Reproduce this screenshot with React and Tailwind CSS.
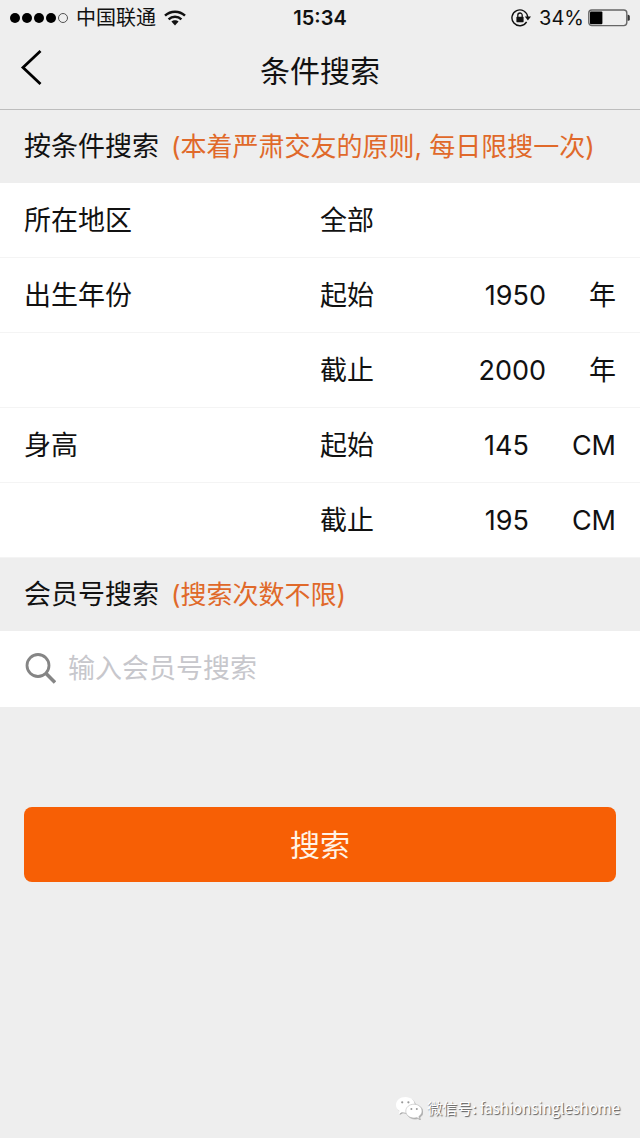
import { useState } from 'react';

const YEARS = ['1950', '1960', '1970', '1980', '1990', '2000'];
const HEIGHTS = ['145', '155', '165', '175', '185', '195'];

const WifiIcon = () => (
  <svg viewBox="0 0 22 16" className="h-4 w-[22px]" aria-hidden="true">
    <g fill="none" stroke="currentColor" strokeWidth="2.5">
      <path d="M1 5.6C6.6 0.4 15.4 0.4 21 5.6" />
      <path d="M4.6 9.3C8.2 6 13.8 6 17.4 9.3" />
    </g>
    <path d="M7.4 11.6C9.4 9.8 12.6 9.8 14.6 11.6L11 15.4Z" fill="currentColor" />
  </svg>
);

const RotationLockIcon = () => (
  <svg viewBox="0 0 20 18" className="h-[18px] w-5" aria-hidden="true">
    <path
      d="M15.6 12.9A7.9 7.9 0 1 1 16.7 8"
      fill="none"
      stroke="currentColor"
      strokeWidth="1.4"
    />
    <path d="M13.8 7.6H20L16.9 11.6Z" fill="currentColor" />
    <rect x="5.4" y="7.8" width="7.2" height="5.4" rx="0.6" fill="currentColor" />
    <path
      d="M6.8 8.4V6.2a2.2 2.2 0 0 1 4.4 0V8.4"
      fill="none"
      stroke="currentColor"
      strokeWidth="1.3"
    />
  </svg>
);

const BatteryIcon = () => (
  <svg viewBox="0 0 42 18" className="h-[18px] w-[42px]" aria-hidden="true">
    <rect
      x="0.8"
      y="1"
      width="38"
      height="15.6"
      rx="3"
      fill="none"
      stroke="#666"
      strokeWidth="1.4"
    />
    <rect x="2" y="2.4" width="12.4" height="12.8" rx="1" fill="#000" />
    <path d="M39.6 5.8h0.6a1.6 1.6 0 0 1 1.6 1.6v2.8a1.6 1.6 0 0 1-1.6 1.6h-0.6Z" fill="#333" />
  </svg>
);

// Each bubble sits on a grey copy of itself, offset like the text shadow.
const WeChatIcon = () => (
  <svg viewBox="0 0 28 24" className="h-6 w-7" aria-hidden="true">
    <g className="drop-shadow-[1px_1px_0_#aaa]" fill="#fff">
      <path d="M10.4 1C5 1 1 4.5 1 8.9c0 2.5 1.3 4.6 3.5 6.1l-.9 2.9 3.3-1.7c1.1.3 2.3.5 3.5.5 5.4 0 9.5-3.5 9.5-7.8S15.8 1 10.4 1Z" />
    </g>
    <g className="drop-shadow-[1px_1px_0_#aaa]" fill="#fff" stroke="#bbb" strokeWidth="0.6">
      <path d="M19 8.200c-4.600 0-8.200 3-8.200 6.900s3.600 6.900 8.200 6.900c1 0 1.900-.1 2.800-.4l2.700 1.400-.7-2.500c2-1.300 3.200-3.200 3.200-5.400 0-3.900-3.500-6.900-8-6.900Z" />
    </g>
    <g fill="#999">
      <circle cx="7.2" cy="6.3" r="1.1" />
      <circle cx="13.4" cy="6.3" r="1.1" />
      <circle cx="16.4" cy="12.9" r="1" />
      <circle cx="21.8" cy="12.9" r="1" />
    </g>
  </svg>
);

const StatusBar = () => (
  <div className="grid h-9 grid-cols-3 items-center px-2.5 text-xl">
    <div className="flex items-center">
      <div className="flex gap-0.5">
        {[1, 2, 3, 4].map((n) => (
          <span key={n} className="size-2.5 rounded-full bg-black" />
        ))}
        <span className="size-2.5 rounded-full border border-neutral-600" />
      </div>
      <span className="mx-2 whitespace-nowrap">中国联通</span>
      <WifiIcon />
    </div>
    <time className="justify-self-center font-semibold">15:34</time>
    <div className="flex items-center justify-end">
      <RotationLockIcon />
      <span className="ml-2 mr-1">34%</span>
      <BatteryIcon />
    </div>
  </div>
);

const SectionTitle = ({ title, note }) => (
  <h2 className="flex h-[73px] items-center gap-3 px-6">
    <span>{title}</span>
    <span className="whitespace-nowrap text-[26px] text-[#e0692a]">{note}</span>
  </h2>
);

const Picker = ({ label, value, options, onChange }) => (
  <select
    aria-label={label}
    value={value}
    onChange={(e) => onChange(e.target.value)}
    className="field-sizing-content appearance-none bg-transparent outline-none"
  >
    {options.map((option) => (
      <option key={option}>{option}</option>
    ))}
  </select>
);

const Row = ({ label, bound, children }) => (
  <div className="grid h-[75px] grid-cols-2 items-center border-b border-[#f4f4f4] px-6 pt-0.5">
    <span>{label}</span>
    <div className="flex items-center">
      <span>{bound}</span>
      {children}
    </div>
  </div>
);

const RangeRow = ({ label, name, bound, unit, value, options, onChange }) => (
  <Row label={label} bound={bound}>
    <div className="ml-auto flex items-center gap-[43px]">
      <Picker label={`${name}${bound}`} value={value} options={options} onChange={onChange} />
      <span>{unit}</span>
    </div>
  </Row>
);

const App = () => {
  const [area, setArea] = useState('全部');
  const [years, setYears] = useState({ from: '1950', to: '2000' });
  const [heights, setHeights] = useState({ from: '145', to: '195' });
  const [memberId, setMemberId] = useState('');

  return (
    <div className="flex min-h-screen flex-col bg-[#eeeeee] font-['Inter','Noto_Sans_CJK_SC',sans-serif] text-[27px] leading-9 text-[#111]">
      <StatusBar />
      <header className="grid h-[74px] grid-cols-[1fr_auto_1fr] items-center border-b border-[#bdbdbd] px-5 pb-1">
        <button type="button" aria-label="返回" className="justify-self-start pb-2">
          <svg viewBox="0 0 22 36" className="h-9 w-[22px]" aria-hidden="true">
            <path d="M20.5 2L3 18.500L20.5 35" fill="none" stroke="#000" strokeWidth="2.8" />
          </svg>
        </button>
        <h1 className="text-3xl">条件搜索</h1>
      </header>

      <form className="flex flex-col" onSubmit={(e) => e.preventDefault()}>
        <SectionTitle title="按条件搜索" note="(本着严肃交友的原则, 每日限搜一次)" />
        <div className="bg-white">
          <Row label="所在地区">
            <Picker label="所在地区" value={area} options={['全部']} onChange={setArea} />
          </Row>
          <RangeRow
            label="出生年份"
            name="出生年份"
            bound="起始"
            unit="年"
            value={years.from}
            options={YEARS}
            onChange={(from) => setYears({ ...years, from })}
          />
          <RangeRow
            name="出生年份"
            bound="截止"
            unit="年"
            value={years.to}
            options={YEARS}
            onChange={(to) => setYears({ ...years, to })}
          />
          <RangeRow
            label="身高"
            name="身高"
            bound="起始"
            unit="CM"
            value={heights.from}
            options={HEIGHTS}
            onChange={(from) => setHeights({ ...heights, from })}
          />
          <RangeRow
            name="身高"
            bound="截止"
            unit="CM"
            value={heights.to}
            options={HEIGHTS}
            onChange={(to) => setHeights({ ...heights, to })}
          />
        </div>

        <SectionTitle title="会员号搜索" note="(搜索次数不限)" />
        <label className="flex h-[76px] items-center gap-3 bg-white px-6">
          <svg viewBox="0 0 32 32" className="size-8 shrink-0" aria-label="搜索会员号">
            <g fill="none" stroke="#858585" strokeWidth="2.8">
              <circle cx="14" cy="12.5" r="11" />
              <path d="M21.8 20.3L31 29.5" strokeWidth="3.6" />
            </g>
          </svg>
          <input
            type="text"
            value={memberId}
            onChange={(e) => setMemberId(e.target.value)}
            placeholder="输入会员号搜索"
            className="min-w-0 flex-1 bg-transparent outline-none placeholder:text-[#c7c7cc]"
          />
        </label>

        <button
          type="submit"
          className="mx-6 mt-[100px] h-[75px] rounded-lg bg-[#f75f05] text-3xl text-[#fff3e6]"
        >
          搜索
        </button>
      </form>

      <footer className="mt-auto flex items-center justify-end gap-1 px-5 pb-[18px] font-['Noto_Sans_CJK_SC',sans-serif] text-[15px] leading-6 text-white [text-shadow:1px_1px_1px_#555]">
        <WeChatIcon />
        <span>微信号: fashionsingleshome</span>
      </footer>
    </div>
  );
};

export default App;
